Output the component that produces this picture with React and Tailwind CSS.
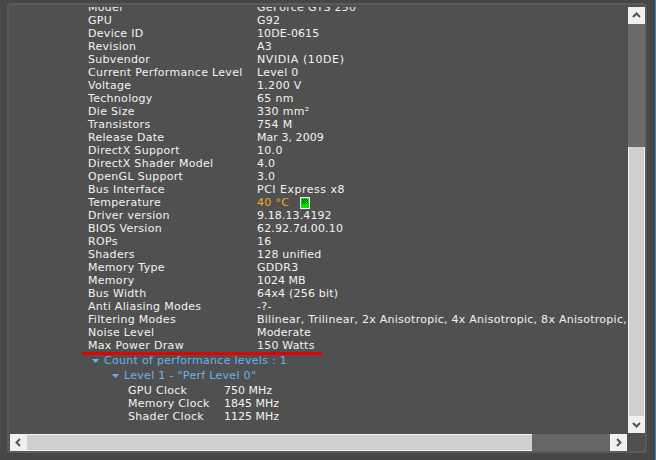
const rows = [
  ["Model", "GeForce GTS 250"],
  ["GPU", "G92"],
  ["Device ID", "10DE-0615", "tracking-[0.1px]"],
  ["Revision", "A3"],
  ["Subvendor", "NVIDIA (10DE)", "tracking-[0.6px]"],
  ["Current Performance Level", "Level 0"],
  ["Voltage", "1.200 V"],
  ["Technology", "65 nm"],
  ["Die Size", "330 mm²"],
  ["Transistors", "754 M"],
  ["Release Date", "Mar 3, 2009", "tracking-[0.05px]"],
  ["DirectX Support", "10.0"],
  ["DirectX Shader Model", "4.0"],
  ["OpenGL Support", "3.0"],
  ["Bus Interface", "PCI Express x8", "tracking-[0.5px]"],
  ["Temperature", "temp"],
  ["Driver version", "9.18.13.4192", "tracking-[0.1px]"],
  ["BIOS Version", "62.92.7d.00.10", "tracking-[0.15px]"],
  ["ROPs", "16"],
  ["Shaders", "128 unified", "tracking-[0.2px]"],
  ["Memory Type", "GDDR3"],
  ["Memory", "1024 MB", "tracking-[0px]"],
  ["Bus Width", "64x4 (256 bit)", "tracking-[0.2px]"],
  ["Anti Aliasing Modes", "-?-"],
  ["Filtering Modes", "Bilinear, Trilinear, 2x Anisotropic, 4x Anisotropic, 8x Anisotropic, 16x Anisotropic", "tracking-[0.26px]"],
  ["Noise Level", "Moderate", "tracking-[0.2px]"],
  ["Max Power Draw", "150 Watts", "tracking-[0.2px]"],
];

const clocks = [
  ["GPU Clock", "750 MHz"],
  ["Memory Clock", "1845 MHz"],
  ["Shader Clock", "1125 MHz"],
];

function Arrow() {
  return (
    <svg width="7" height="4" viewBox="0 0 7 4" className="mr-[5px] shrink-0">
      <path d="M0 0H7L3.5 4Z" fill="#6ab2ee" />
    </svg>
  );
}

function Chevron({ d }) {
  return (
    <svg width="9" height="9" viewBox="0 0 9 9" fill="none">
      <path d={d} stroke="#555555" strokeWidth="2" />
    </svg>
  );
}

function Btn({ d }) {
  return (
    <div className="flex h-[17px] w-[17px] shrink-0 items-center justify-center bg-[#f0f0f0]">
      <Chevron d={d} />
    </div>
  );
}

function GpuChip() {
  return (
    <svg width="10" height="12" viewBox="0 0 10 12" className="ml-[10px]" shapeRendering="crispEdges">
      <rect width="10" height="12" fill="#f4f4f4" />
      <rect x="1" y="1" width="8" height="10" fill="#00e600" />
      <path d="M2 2h1v1H2zM4 2h1v1H4zM6 2h1v1H6zM3 3h1v1H3zM5 3h1v1H5zM7 3h1v1H7zM2 4h1v1H2zM4 4h1v1H4zM6 4h1v1H6zM3 5h1v1H3zM5 5h1v1H5zM7 5h1v1H7zM2 6h1v1H2zM4 6h1v1H4zM6 6h1v1H6z" fill="#0a3a0a" />
    </svg>
  );
}

export default function App() {
  return (
    <div
      className="relative h-[460px] w-[656px] overflow-hidden bg-[repeating-linear-gradient(90deg,#4a4a4a_0,#4a4a4a_1px,#434343_1px,#434343_2px)] pb-[7px] pl-[7px] pr-[9px] pt-[3px] text-[11px] leading-[13px] tracking-[0.3px] text-[#f2f2f2]"
      style={{ fontFamily: '"DejaVu Sans", Verdana, sans-serif' }}
    >
      <div className="flex h-full flex-col rounded-[4px] border-2 border-[#5a5a5a] bg-[#505050] pl-px pt-[2px]">
        <div className="flex min-h-0 flex-1">
          <div className="min-w-0 flex-1 overflow-hidden">
            <div className="-mt-[6px] w-[616px] whitespace-nowrap pl-[78px]">
              {rows.map(([k, v, t]) => (
                <div key={k} className="flex h-[13px] items-center">
                  <span className="w-[169px] shrink-0">{k}</span>
                  {v === "temp" ? (
                    <span className="flex items-center">
                      <span className="w-[33px] text-[#efae1e]">40 °C</span>
                      <GpuChip />
                    </span>
                  ) : (
                    <span className={t}>{v}</span>
                  )}
                </div>
              ))}
              <div className="ml-[4px] mt-px flex h-[15px] items-center text-[#6ab2ee]">
                <Arrow />
                <span>Count of performance levels : 1</span>
              </div>
              <div className="ml-[24px] flex h-[15px] items-center text-[#6ab2ee]">
                <Arrow />
                <span>Level 1 - "Perf Level 0"</span>
              </div>
              <div className="ml-[40px] mt-px">
                {clocks.map(([k, v]) => (
                  <div key={k} className="flex h-[13px] items-center">
                    <span className="w-[96px] shrink-0">{k}</span>
                    <span className="tracking-[0px]">{v}</span>
                  </div>
                ))}
              </div>
            </div>
          </div>
          <div className="flex w-[17px] shrink-0 flex-col bg-[#6a6a6a]">
            <Btn d="M1 6L4.5 2.5L8 6" />
            <div className="h-[123px] shrink-0" />
            <div className="flex-1 border-x border-[#f4f4f4] bg-[#cfcfcf]" />
            <Btn d="M1 3L4.5 6.5L8 3" />
          </div>
        </div>
        <div className="mr-[18px] mt-px flex h-[17px] shrink-0 bg-[#666666]">
          <Btn d="M6 1L2.5 4.5L6 8" />
          <div className="w-[505px] border-y border-[#f4f4f4] bg-[#cfcfcf]" />
          <div className="flex-1" />
          <Btn d="M3 1L6.5 4.5L3 8" />
        </div>
      </div>
      <div className="absolute left-[82px] top-[352px] h-[3px] w-[240px] bg-[#e60000]" />
      <div className="absolute right-0 top-0 h-full w-px bg-[#2f7fc4]" />
    </div>
  );
}
